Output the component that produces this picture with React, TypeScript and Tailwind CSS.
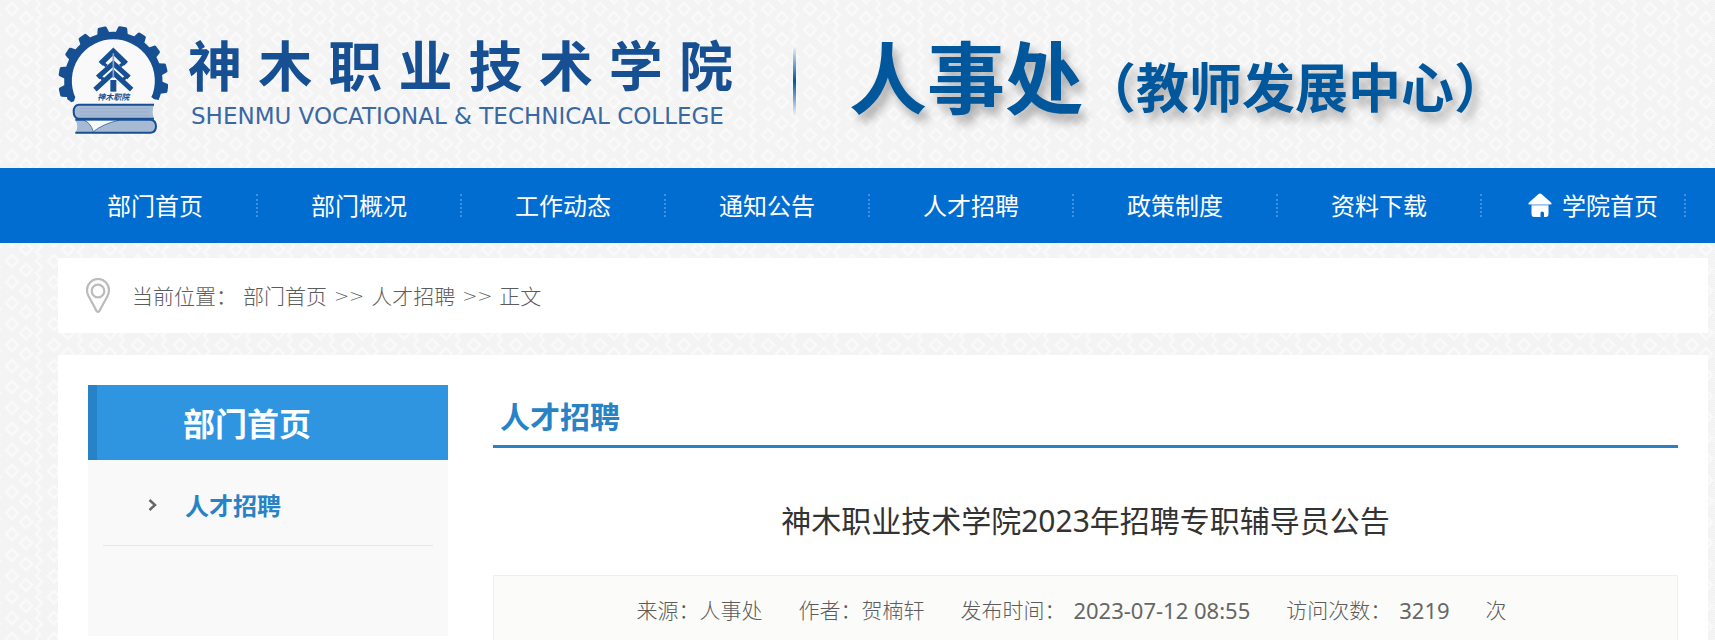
const navItems = ["部门首页", "部门概况", "工作动态", "通知公告", "人才招聘", "政策制度", "资料下载"];

const collegeName = ["神", "木", "职", "业", "技", "术", "学", "院"];

const gearTeeth = [-102, -80, -57, -35, -12, 10, 32, 54, 76, 98];

function Texture() {
  return (
    <svg className="absolute inset-0 -z-10 h-full w-full" aria-hidden="true">
      <defs>
        <pattern id="lattice" width="42" height="21" patternUnits="userSpaceOnUse">
          <g fill="none" stroke="#f9f9f9" strokeWidth="2.5">
            <path d="M12 3l6 6-6 6-6-6z" />
            <path d="M26 12l6 6-6 6-6-6zM26-9l6 6-6 6-6-6z" />
            <path d="M34-2l6 6-4 5 6 6-8 8M-2 13l2 2-2 2" />
          </g>
        </pattern>
        <pattern id="grain" width="2" height="2" patternUnits="userSpaceOnUse">
          <path d="M0 0h1v1h-1zM1 1h1v1h-1z" fill="#f1f1f1" />
        </pattern>
      </defs>
      <rect width="100%" height="100%" fill="#f6f6f6" />
      <rect width="100%" height="100%" fill="url(#grain)" />
      <rect width="100%" height="100%" fill="url(#lattice)" />
    </svg>
  );
}

function Emblem() {
  return (
    <svg viewBox="24 30 330 324" className="h-[108px] w-[110px] shrink-0" aria-hidden="true">
      <path d="M65 248A136 136 0 1 1 315 248L290 262H90z" fill="#f9f9f9" />
      <path d="M65 248A136 136 0 1 1 315 248" fill="none" stroke="#174f93" strokeWidth="23" />
      {gearTeeth.map((angle) => (
        <path
          key={angle}
          d="M170 56L176 34Q177 30 181 30H199Q203 30 204 34L210 56z"
          fill="#174f93"
          transform={`rotate(${angle} 190 195)`}
        />
      ))}
      <path d="M54 238l22 4-4 14-8 3-12-10zM326 236l-22 4 6 8 8 3 8-8z" fill="#174f93" />

      <g fill="none" stroke="#174f93" strokeWidth="15">
        <path d="M152 143L190 106L228 143" strokeWidth="17" />
        <path d="M152 136l18 14M228 136l-18 14" strokeWidth="10" />
        <path d="M143 184L190 142L237 184" />
        <path d="M143 176l17 14M237 176l-17 14" strokeWidth="10" />
        <path d="M135 221L190 170L245 221" />
      </g>
      <path d="M181 192h18v35h-18z" fill="#174f93" />
      <path d="M190 112v74" stroke="#8ba6c8" strokeWidth="5" />
      <text
        x="190"
        y="252"
        textAnchor="middle"
        className="fill-[#174f93] font-['Noto_Sans_CJK_SC',sans-serif] text-[24px] font-bold italic"
      >
        神木职院
      </text>

      <path d="M312 266H86Q71 268 71 287Q71 306 86 308H312Q304 287 312 266z" fill="#a7bad4" />
      <path d="M312 266H86Q71 268 71 287Q71 306 86 308H312" fill="none" stroke="#174f93" strokeWidth="6" />
      <path d="M90 278H298M88 288H296M90 298H298" stroke="#93abca" strokeWidth="2" />
      <path d="M76 311H302Q318 313 318 331Q318 349 302 350H76Q88 331 76 311z" fill="#a7bad4" />
      <path d="M76 311H302Q318 313 318 331Q318 349 302 350H76" fill="none" stroke="#174f93" strokeWidth="6" />
      <path d="M102 313Q122 320 130 347Q160 323 206 313z" fill="#f9f9f9" stroke="#174f93" strokeWidth="2" />
    </svg>
  );
}

function HouseIcon() {
  return (
    <svg viewBox="0 0 24 24" className="h-6 w-6 shrink-0" aria-hidden="true">
      <path d="M12 0.500Q13 0.500 14 1.500L23 9.500Q24.500 11.500 22.500 11.500H1.500Q-0.500 11.500 1 9.500L10 1.500Q11 0.500 12 0.500z" fill="#fff" />
      <path d="M3.500 13H20.500V21Q20.500 24 18 24H16V20Q16 18.500 14 18.500Q12.500 18.500 12.500 20V24H6Q3.500 24 3.500 21z" fill="#fff" />
      <path d="M3.500 12.300H20.500" stroke="#b9d6f3" strokeWidth="1.500" />
    </svg>
  );
}

function PinIcon() {
  return (
    <svg viewBox="0 0 24 35" className="h-[35px] w-6 shrink-0" fill="none" stroke="#bbb" aria-hidden="true">
      <path d="M12 33.800Q10.500 33.800 9 30L2.500 18Q1 15 1 12A11 11 0 0 1 23 12Q23 15 21.500 18L15 30Q13.500 33.800 12 33.800z" strokeWidth="2.200" />
      <circle cx="12" cy="13" r="6.300" strokeWidth="2.200" />
    </svg>
  );
}

export default function App() {
  return (
    <div className="relative isolate min-h-screen overflow-hidden font-['Noto_Sans_CJK_SC',sans-serif] text-[#5c5c5c]">
      <Texture />

      <header className="flex h-[168px] items-start pl-[58px] pt-[26px]">
        <Emblem />
        <div className="ml-5 w-[545px]">
          <div className="flex justify-between text-[54px] font-bold leading-[76px] text-[#174f93]">
            {collegeName.map((char) => (
              <span key={char}>{char}</span>
            ))}
          </div>
          <p className="whitespace-nowrap pl-[3px] font-['DejaVu_Sans',sans-serif] text-[23px] leading-7 text-[#3a68a3]">
            SHENMU VOCATIONAL &amp; TECHNICAL COLLEGE
          </p>
        </div>
        <div className="ml-[60px] mt-5 h-[70px] w-[3px] shrink-0 bg-linear-to-b from-transparent via-[#00579c] to-transparent" />
        <h1 className="ml-[53px] flex items-baseline whitespace-nowrap font-bold leading-[96px] text-[#00579c] [text-shadow:5px_8px_10px_rgba(0,0,0,0.3)]">
          <span className="text-[78px]">人事处</span>
          <span className="text-[53px]">（教师发展中心）</span>
        </h1>
      </header>

      <nav className="flex h-[75px] items-center bg-[#026dd1] pl-[54px] text-2xl text-white">
        {navItems.map((item) => (
          <a key={item} href="#" className="flex w-[204px] shrink-0 items-center">
            <span className="flex-1 pb-0.5 text-center">{item}</span>
            <span className="h-[23px] border-l-2 border-dotted border-white/25" />
          </a>
        ))}
        <a href="#" className="flex w-[204px] shrink-0 items-center">
          <span className="flex flex-1 items-center justify-end gap-2.5 pb-0.5 pr-[26px]">
            <HouseIcon />
            学院首页
          </span>
          <span className="h-[23px] border-l-2 border-dotted border-white/25" />
        </a>
      </nav>

      <main className="pl-[58px] pr-[7px]">
        <div className="mt-[15px] flex h-[75px] items-center bg-white pl-7 text-[21px] font-light">
          <PinIcon />
          <span className="ml-[22px] w-[111px] whitespace-nowrap">当前位置：</span>
          <a href="#">部门首页</a>
          <span className="mx-[7px] font-['DejaVu_Sans',sans-serif] text-lg">&gt;&gt;</span>
          <a href="#">人才招聘</a>
          <span className="mx-[7px] font-['DejaVu_Sans',sans-serif] text-lg">&gt;&gt;</span>
          <span>正文</span>
        </div>

        <div className="mt-[22px] flex min-h-[285px] gap-[45px] bg-white pl-[30px] pr-[30px] pt-[30px]">
          <aside className="w-[360px] shrink-0">
            <h2 className="flex h-[75px] items-center border-l-9 border-[#2882c6] bg-[#3095e0] pb-0.5 pl-[86px] text-[32px] font-bold text-white">
              部门首页
            </h2>
            <ul className="h-44 bg-[#f9f9f9] px-[15px]">
              <li className="border-b border-[#e8e8e8]">
                <a href="#" className="flex h-[85px] items-center pl-[45px] pt-1 text-2xl font-bold leading-9 text-[#2882c6]">
                  <svg viewBox="0 0 9 12" className="mr-7 h-3 w-[9px]" fill="none" stroke="#666" strokeWidth="2.500" aria-hidden="true">
                    <path d="M1.500 1L7 6L1.500 11" />
                  </svg>
                  人才招聘
                </a>
              </li>
            </ul>
          </aside>

          <article className="min-w-0 flex-1">
            <h2 className="flex h-[63px] items-center border-b-3 border-[#2882c6] pl-[7px] text-[30px] font-bold text-[#2882c6]">
              人才招聘
            </h2>
            <h3 className="mt-[46px] text-center text-[30px] leading-[50px] text-[#333]">
              神木职业技术学院<span className="font-['Noto_Sans',sans-serif]">2023</span>年招聘专职辅导员公告
            </h3>
            <div className="mt-[29px] flex h-[70px] items-center justify-center gap-9 whitespace-nowrap border border-[#efefef] bg-[#fbfbf9] pr-7 text-[21px] font-light">
              <span>来源：人事处</span>
              <span>作者：贺楠轩</span>
              <span className="flex items-center gap-2">
                发布时间：
                <span className="font-['Noto_Sans',sans-serif] text-[22px] font-normal text-[#666]">2023-07-12 08:55</span>
              </span>
              <span className="flex items-center gap-2">
                访问次数：
                <span className="font-['Noto_Sans',sans-serif] text-[22px] font-normal text-[#666]">3219</span>
              </span>
              <span>次</span>
            </div>
          </article>
        </div>
      </main>
    </div>
  );
}
